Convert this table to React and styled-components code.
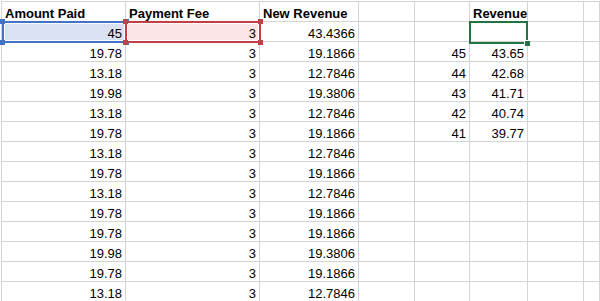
import React from 'react';
import styled, { createGlobalStyle } from 'styled-components';

const GlobalStyle = createGlobalStyle`
  html, body {
    margin: 0;
    padding: 0;
    background: #fff;
    overflow: hidden;
  }
  body {
    font-family: "Liberation Sans", Arial, sans-serif;
  }
`;

const GRID = '#d4d4d4';

const Sheet = styled.div`
  display: grid;
  grid-template-columns: 124px 134px 99px 56px 55px 58px 56px 1fr;
  grid-auto-rows: 20px;
  margin: 1px 0 0 1px;
  border-top: 1px solid ${GRID};
  border-left: 1px solid ${GRID};
`;

const Cell = styled.div`
  position: relative;
  box-sizing: border-box;
  border-right: 1px solid ${GRID};
  border-bottom: 1px solid ${GRID};
  padding: 0 3px;
  display: flex;
  align-items: flex-end;
  justify-content: ${p => (p.$num ? 'flex-end' : 'flex-start')};
  font-size: 13px;
  line-height: 15px;
  font-weight: ${p => (p.$head ? 700 : 400)};
  color: #000;
  white-space: nowrap;
  overflow: visible;
`;

const Text = styled.span`
  position: relative;
  z-index: 2;
`;

const RefBox = styled.div`
  position: absolute;
  z-index: 1;
  top: -1px;
  bottom: -2px;
  left: ${p => p.$left};
  right: ${p => p.$right};
  border: 2px solid ${p => p.$color};
  background: ${p => p.$fill || 'transparent'};
  box-shadow: ${p => (p.$fill ? 'inset 0 0 0 1px #fff' : 'none')};
`;

const Handle = styled.span`
  position: absolute;
  z-index: 3;
  width: 5px;
  height: 5px;
  background: ${p => p.$color};
  ${p => (p.$v === 't' ? 'top: -4px;' : 'bottom: -4px;')}
  ${p => (p.$h === 'l' ? 'left: -4px;' : 'right: -4px;')}
`;

const ActiveBox = styled.div`
  position: absolute;
  z-index: 1;
  top: -1px;
  left: -1px;
  right: -1px;
  bottom: -3px;
  border: 2px solid #217346;
`;

const FillHandle = styled.span`
  position: absolute;
  right: -4px;
  bottom: -4px;
  width: 5px;
  height: 5px;
  background: #217346;
  border: 1px solid #fff;
  border-right: none;
  border-bottom: none;
`;

const corners = [
  ['t', 'l'],
  ['t', 'r'],
  ['b', 'l'],
  ['b', 'r'],
];

const RefHighlight = ({ color, fill, left, right }) => (
  <RefBox $color={color} $fill={fill} $left={left} $right={right}>
    {corners.map(([v, h]) => (
      <Handle key={v + h} $v={v} $h={h} $color={color} />
    ))}
  </RefBox>
);

const paid = ['45', '19.78', '13.18', '19.98', '13.18', '19.78', '13.18', '19.78', '13.18', '19.78', '19.78', '19.98', '19.78', '13.18'];
const revenue = ['43.4366', '19.1866', '12.7846', '19.3806', '12.7846', '19.1866', '12.7846', '19.1866', '12.7846', '19.1866', '19.1866', '19.3806', '19.1866', '12.7846'];
const lookup = [
  ['45', '43.65'],
  ['44', '42.68'],
  ['43', '41.71'],
  ['42', '40.74'],
  ['41', '39.77'],
];

export default function App() {
  return (
    <>
      <GlobalStyle />
      <Sheet>
        <Cell $head>Amount Paid</Cell>
        <Cell $head>Payment Fee</Cell>
        <Cell $head>New Revenue</Cell>
        <Cell />
        <Cell />
        <Cell $head><Text>Revenue</Text></Cell>
        <Cell />
        <Cell />

        {paid.map((amount, i) => {
          const first = i === 0;
          const side = i >= 1 && i <= 5 ? lookup[i - 1] : ['', ''];
          return (
            <React.Fragment key={i}>
              <Cell $num>
                {first && <RefHighlight color="#4472c4" fill="#d9e1f2" left="0" right="-2px" />}
                <Text>{amount}</Text>
              </Cell>
              <Cell $num>
                {first && <RefHighlight color="#c43e48" fill="#fbe5e6" left="-1px" right="-2px" />}
                <Text>3</Text>
              </Cell>
              <Cell $num>{revenue[i]}</Cell>
              <Cell />
              <Cell $num>{side[0]}</Cell>
              <Cell $num>
                {first && (
                  <ActiveBox>
                    <FillHandle />
                  </ActiveBox>
                )}
                {side[1]}
              </Cell>
              <Cell />
              <Cell />
            </React.Fragment>
          );
        })}
      </Sheet>
    </>
  );
}
